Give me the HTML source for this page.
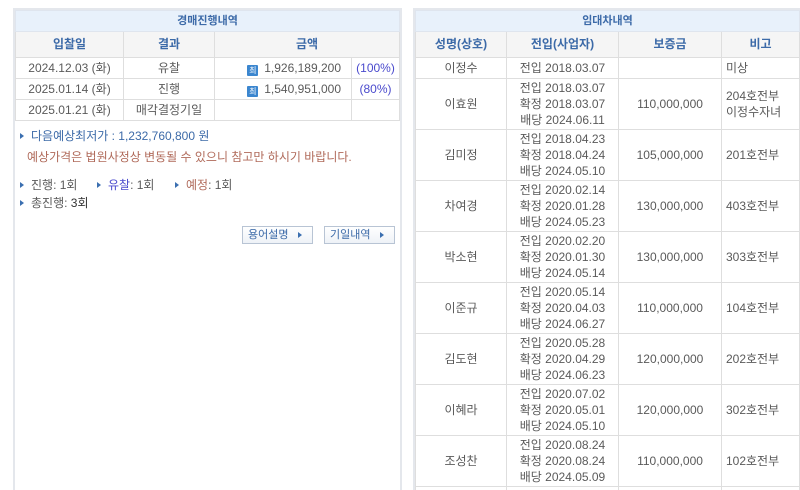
<!DOCTYPE html>
<html><head><meta charset="utf-8"><style>
*{margin:0;padding:0;box-sizing:border-box}
html,body{width:800px;height:490px;overflow:hidden}
body{background:#fff;font-family:"Liberation Sans","Noto Sans CJK KR","NanumGothic",sans-serif;font-size:12px;color:#5a5a5a;position:relative}
.panel{position:absolute;top:8px;border:2px solid #e4e7ec;border-bottom:none;height:482px;background:#fff;overflow:hidden}
table{border-collapse:collapse;table-layout:fixed;width:100%}
td,th{border:1px solid #dedede;text-align:center;font-weight:normal;line-height:17px;white-space:nowrap;overflow:hidden;padding:0}
th.h{background:#e8f1fb;color:#3c6aa8;font-weight:bold;font-size:11px;height:21px;border-color:#dfe5ee}
th.c{background:#f5f5f5;color:#3c6aa8;font-weight:bold;height:26px}
.r td{height:21px}
.r3 td{height:51px;line-height:16.3px}
.ic{display:inline-block;width:11px;height:11px;background:#3b86cf;color:#fff;font-size:8px;line-height:11px;text-align:center;vertical-align:-1px;margin-right:6px;border-radius:1px}
.pct{color:#4a4acd}
.tri{display:inline-block;width:0;height:0;border-left:4px solid #3b6fb0;border-top:3px solid transparent;border-bottom:3px solid transparent;margin-right:7px;vertical-align:1px}
.btn{position:absolute;top:226px;height:18px;border:1px solid #b8c4d4;background:linear-gradient(#fff,#eef2f7);color:#3c6aa8;font-size:11px;line-height:16px;padding-left:5px}
.btn i{position:absolute;right:10px;top:5px;border-left:4px solid #3b6fb0;border-top:3px solid transparent;border-bottom:3px solid transparent}
.l{text-align:left!important;padding-left:4px!important}
</style></head><body>
<div class="panel" style="left:13px;width:389px">
<table>
<colgroup><col style="width:108px"><col style="width:91px"><col style="width:137px"><col></colgroup>
<tr><th class="h" colspan="4">경매진행내역</th></tr>
<tr><th class="c">입찰일</th><th class="c">결과</th><th class="c" colspan="2">금액</th></tr>
<tr class="r"><td>2024.12.03 (화)</td><td>유찰</td><td style="text-align:right;padding-right:10px"><span class="ic">최</span>1,926,189,200</td><td class="pct">(100%)</td></tr>
<tr class="r"><td>2025.01.14 (화)</td><td>진행</td><td style="text-align:right;padding-right:10px"><span class="ic">최</span>1,540,951,000</td><td class="pct">(80%)</td></tr>
<tr class="r"><td>2025.01.21 (화)</td><td>매각결정기일</td><td></td><td></td></tr>
</table>
</div>
<div style="position:absolute;left:20px;top:127px;color:#3c6aa8"><span class="tri"></span>다음예상최저가 : 1,232,760,800 원</div>
<div style="position:absolute;left:27px;top:148px;color:#b06a5a">예상가격은 법원사정상 변동될 수 있으니 참고만 하시기 바랍니다.</div>
<div style="position:absolute;left:20px;top:176px"><span class="tri"></span>진행: 1회</div>
<div style="position:absolute;left:97px;top:176px"><span class="tri"></span><span style="color:#4a4acd">유찰</span>: 1회</div>
<div style="position:absolute;left:175px;top:176px"><span class="tri"></span><span style="color:#b06a5a">예정</span>: 1회</div>
<div style="position:absolute;left:20px;top:194px"><span class="tri"></span>총진행: <span style="color:#333">3회</span></div>
<div class="btn" style="left:242px;width:71px">용어설명<i></i></div>
<div class="btn" style="left:324px;width:71px">기일내역<i></i></div>

<div class="panel" style="left:413px;width:389px">
<table>
<colgroup><col style="width:91px"><col style="width:112px"><col style="width:103px"><col></colgroup>
<tr><th class="h" colspan="4">임대차내역</th></tr>
<tr><th class="c">성명(상호)</th><th class="c">전입(사업자)</th><th class="c">보증금</th><th class="c">비고</th></tr>
<tr class="r"><td>이정수</td><td>전입 2018.03.07</td><td></td><td class="l">미상</td></tr>
<tr class="r3"><td>이효원</td><td>전입 2018.03.07<br>확정 2018.03.07<br>배당 2024.06.11</td><td>110,000,000</td><td class="l">204호전부<br>이정수자녀</td></tr>
<tr class="r3"><td>김미정</td><td>전입 2018.04.23<br>확정 2018.04.24<br>배당 2024.05.10</td><td>105,000,000</td><td class="l">201호전부</td></tr>
<tr class="r3"><td>차여경</td><td>전입 2020.02.14<br>확정 2020.01.28<br>배당 2024.05.23</td><td>130,000,000</td><td class="l">403호전부</td></tr>
<tr class="r3"><td>박소현</td><td>전입 2020.02.20<br>확정 2020.01.30<br>배당 2024.05.14</td><td>130,000,000</td><td class="l">303호전부</td></tr>
<tr class="r3"><td>이준규</td><td>전입 2020.05.14<br>확정 2020.04.03<br>배당 2024.06.27</td><td>110,000,000</td><td class="l">104호전부</td></tr>
<tr class="r3"><td>김도현</td><td>전입 2020.05.28<br>확정 2020.04.29<br>배당 2024.06.23</td><td>120,000,000</td><td class="l">202호전부</td></tr>
<tr class="r3"><td>이혜라</td><td>전입 2020.07.02<br>확정 2020.05.01<br>배당 2024.05.10</td><td>120,000,000</td><td class="l">302호전부</td></tr>
<tr class="r3"><td>조성찬</td><td>전입 2020.08.24<br>확정 2020.08.24<br>배당 2024.05.09</td><td>110,000,000</td><td class="l">102호전부</td></tr>
<tr class="r3"><td></td><td>전입 2020.09.04<br>확정 2020.09.04<br>배당 2024.05.10</td><td></td><td></td></tr>
</table>
</div>
</body></html>
